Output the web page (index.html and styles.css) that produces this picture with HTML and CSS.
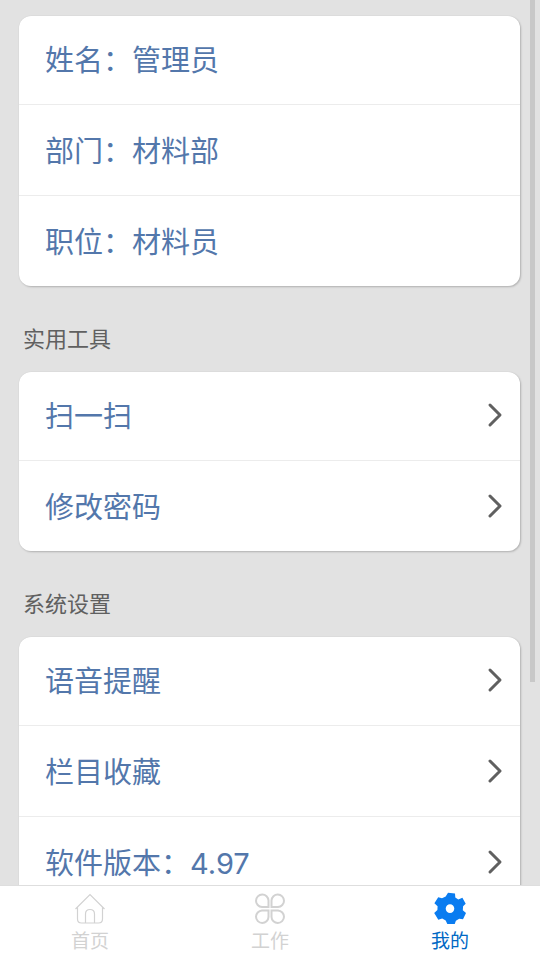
FILE: index.html
```html
<!DOCTYPE html>
<html lang="zh-CN">
<head>
<meta charset="utf-8">
<meta name="viewport" content="width=device-width, initial-scale=1">
<title>我的</title>
<link rel="stylesheet" href="styles.css">
</head>
<body>
<div class="scroll-thumb"></div>
<main class="content">
  <ul class="card">
    <li class="row"><span class="label">姓名：管理员</span></li>
    <li class="row"><span class="label">部门：材料部</span></li>
    <li class="row"><span class="label">职位：材料员</span></li>
  </ul>
  <h2 class="section-title">实用工具</h2>
  <ul class="card">
    <li><a class="row" href="#scan"><span class="label">扫一扫</span><svg class="chevron" viewBox="0 0 16 26"><path d="M3 3 13 13 3 23"/></svg></a></li>
    <li><a class="row" href="#password"><span class="label">修改密码</span><svg class="chevron" viewBox="0 0 16 26"><path d="M3 3 13 13 3 23"/></svg></a></li>
  </ul>
  <h2 class="section-title">系统设置</h2>
  <ul class="card">
    <li><a class="row" href="#voice"><span class="label">语音提醒</span><svg class="chevron" viewBox="0 0 16 26"><path d="M3 3 13 13 3 23"/></svg></a></li>
    <li><a class="row" href="#favorites"><span class="label">栏目收藏</span><svg class="chevron" viewBox="0 0 16 26"><path d="M3 3 13 13 3 23"/></svg></a></li>
    <li><a class="row" href="#version"><span class="label">软件版本：4.97</span><svg class="chevron" viewBox="0 0 16 26"><path d="M3 3 13 13 3 23"/></svg></a></li>
  </ul>
</main>
<nav class="tabs">
  <a class="tab" href="#home">
    <svg class="tab-icon" viewBox="0 0 34 34"><path d="M2.500 17 17 2.500 31.500 17M4.500 15.500V27Q4.500 31 8.500 31h17q4 0 4-4V15.500M12.500 31v-9q0-4.500 4.500-4.500t4.500 4.500v9"/></svg>
    <span>首页</span>
  </a>
  <a class="tab" href="#work">
    <svg class="tab-icon bold" viewBox="0 0 34 34"><path d="M15.500 15H9A6.250 6.250 0 1 1 15.500 8.500zM18.500 15V8.500A6.250 6.250 0 1 1 25 15zM15.500 18.500V25A6.250 6.250 0 1 1 9 18.500zM18.500 18.500H25A6.250 6.250 0 1 1 18.500 25z"/></svg>
    <span>工作</span>
  </a>
  <a class="tab active" href="#mine" aria-current="page">
    <svg class="tab-icon" viewBox="0 0 34 34"><path fill-rule="evenodd" d="M15 .8 22 1.600 22.300 5.400 25.300 7.500 29.400 5.800 32.700 11.700 30.100 14.300 29.800 18.200 33 20.900 30 27.200 26.200 26.700 22.900 28.700 21.700 31.900 14.300 31.900 12.700 28.500 9.200 26.400 5.300 27.800 1.200 21.100 4.400 18.100 4.600 14.300 1.400 11.200 5.200 5.200 9 6.300 12.700 4.400zM17 12.300a4.300 4.300 0 1 0 0 8.600 4.300 4.300 0 1 0 0-8.600z"/></svg>
    <span>我的</span>
  </a>
</nav>
</body>
</html>
```
FILE: styles.css
```css
* {
  box-sizing: border-box;
}

body {
  margin: 0;
  height: 100vh;
  display: flex;
  flex-direction: column;
  background: #e2e2e2;
  font-family: Inter, "Noto Sans CJK SC", sans-serif;
}

a {
  color: inherit;
  text-decoration: none;
}

.content {
  flex: 1;
  min-height: 0;
  overflow-y: auto;
  scrollbar-width: none;
  padding: 16px 20px 16px 19px;
}

.scroll-thumb {
  position: absolute;
  top: 0;
  right: 5px;
  width: 5px;
  height: 71%;
  background: #c8c8c8;
}

.card {
  margin: 0;
  padding: 0;
  list-style: none;
  background: #fff;
  border-radius: 12px;
  box-shadow: 0 0 1px #c4c4c4, 1px 1px 2px 0 #b0b0b0;
  color: #5377ab;
  font-size: 29px;
  line-height: 44px;
}

.row {
  display: flex;
  align-items: center;
  justify-content: space-between;
  min-height: 88px;
  padding: 0 17px 2px 26px;
}

.card > li + li {
  border-top: 1px solid #ececec;
  min-height: 91px;
  padding-top: 2px;
}

.label {
  padding-top: 4px;
}

.chevron {
  width: 16px;
  height: 26px;
  fill: none;
  stroke: #606060;
  stroke-width: 3;
  stroke-linecap: round;
  stroke-linejoin: round;
}

.section-title {
  margin: 36px 0 16px 4px;
  color: #606060;
  font-size: 22px;
  line-height: 34px;
  font-weight: 400;
}

.tabs {
  display: flex;
  position: relative;
  background: #fff;
  border-top: 1px solid #dedede;
}

.tab {
  flex: 1;
  display: flex;
  flex-direction: column;
  align-items: center;
  gap: 2px;
  padding: 6px 0 4px;
  color: #d2d2d2;
  font-size: 19px;
  line-height: 28px;
}

.tab-icon {
  width: 34px;
  height: 34px;
  fill: none;
  stroke: #d2d2d2;
  stroke-width: 1.2;
}

.tab-icon.bold {
  stroke-width: 2;
}

.active {
  color: #0068c4;
}

.active .tab-icon {
  fill: #0a7cf0;
  stroke: none;
}
```
